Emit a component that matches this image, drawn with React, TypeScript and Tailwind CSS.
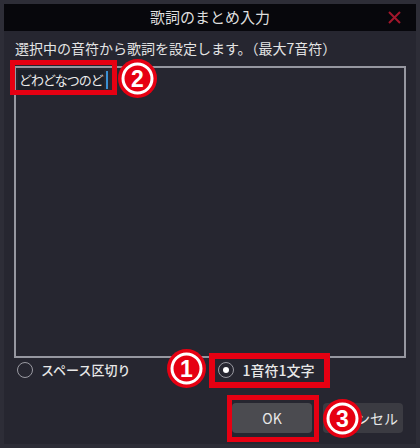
import React from "react";

function Mark({ n }: { n: string }) {
  return (
    <svg width="39" height="39" viewBox="0 0 39 39">
      <circle cx="19.5" cy="19.5" r="19.5" fill="#e60012" />
      <circle cx="19.5" cy="19.5" r="14.5" fill="none" stroke="#ffffff" strokeWidth="3" />
      <text
        x="19.5"
        y="28"
        textAnchor="middle"
        fontSize="23"
        fontWeight="700"
        fill="#ffffff"
        fontFamily="'Liberation Sans', Arial, sans-serif"
      >
        {n}
      </text>
    </svg>
  );
}

export default function App() {
  return (
    <div className="relative w-[420px] h-[448px] bg-[#2d2d37] p-1 font-['Noto_Sans_CJK_JP',sans-serif]">
      <div className="flex h-full flex-col bg-[#262630]">
        <div className="relative flex h-[27px] items-center justify-center bg-[#07070c] text-[15px] text-[#dedede]">
          歌詞のまとめ入力
          <svg className="absolute right-[15px] top-[7px]" width="13" height="13" viewBox="0 0 13 13">
            <path d="M1 1 L12 12 M12 1 L1 12" stroke="#a3172c" strokeWidth="2" />
          </svg>
        </div>
        <div className="flex flex-1 flex-col px-[10px] pt-[8px]">
          <div className="ml-[1px] text-[14px] leading-[18px] text-[#e4e4e4]">
            選択中の音符から歌詞を設定します。（最大7音符）
          </div>
          <div className="mt-[9px] h-[292px] border-2 border-[#9697a0] bg-[#262630] px-[2px] pt-[2px]">
            <div className="flex items-center">
              <span className="bg-[#1d2029] px-[1px] text-[13px] leading-[20px] tracking-[-1px] text-[#ececec]">どわどなつのど</span>
              <span className="ml-[2px] h-[18px] w-[2px] bg-[#3a90d4]" />
            </div>
          </div>
          <div className="mt-[2px] flex h-[20px] items-center text-[#e8e8e8]">
            <div className="ml-[3px] flex items-center gap-[8px]">
              <span className="h-[16px] w-[16px] rounded-full border-[1.5px] border-[#9a9aa2]" />
              <span className="text-[13px] font-medium">スペース区切り</span>
            </div>
            <div className="ml-[88px] flex items-center gap-[8px]">
              <span className="flex h-[16px] w-[16px] items-center justify-center rounded-full border-[1.5px] border-[#9a9aa2]">
                <span className="h-[6px] w-[6px] rounded-full bg-white" />
              </span>
              <span className="text-[14px] font-medium">1音符1文字</span>
            </div>
          </div>
          <div className="mt-[23px] mr-[3px] flex justify-end gap-[11px]">
            <button className="h-[30px] w-[80px] rounded-[4px] bg-[#4b4b50] text-[14px] text-[#e8e8e8]">OK</button>
            <button className="h-[30px] w-[80px] rounded-[4px] bg-[#3b3b42] text-[14px] text-[#e8e8e8]">キャンセル</button>
          </div>
        </div>
      </div>

      {/* annotations */}
      <div className="absolute left-[10px] top-[60px] h-[35px] w-[107px] border-[5px] border-[#e60012]" />
      <div className="absolute left-[118px] top-[59px]">
        <Mark n="2" />
      </div>
      <div className="absolute left-[209px] top-[353px] h-[35px] w-[121px] border-[6px] border-[#e60012]" />
      <div className="absolute left-[167px] top-[349px]">
        <Mark n="1" />
      </div>
      <div className="absolute left-[227px] top-[395px] h-[47px] w-[92px] border-[5px] border-[#e60012]" />
      <div className="absolute left-[323px] top-[399px]">
        <Mark n="3" />
      </div>
    </div>
  );
}
